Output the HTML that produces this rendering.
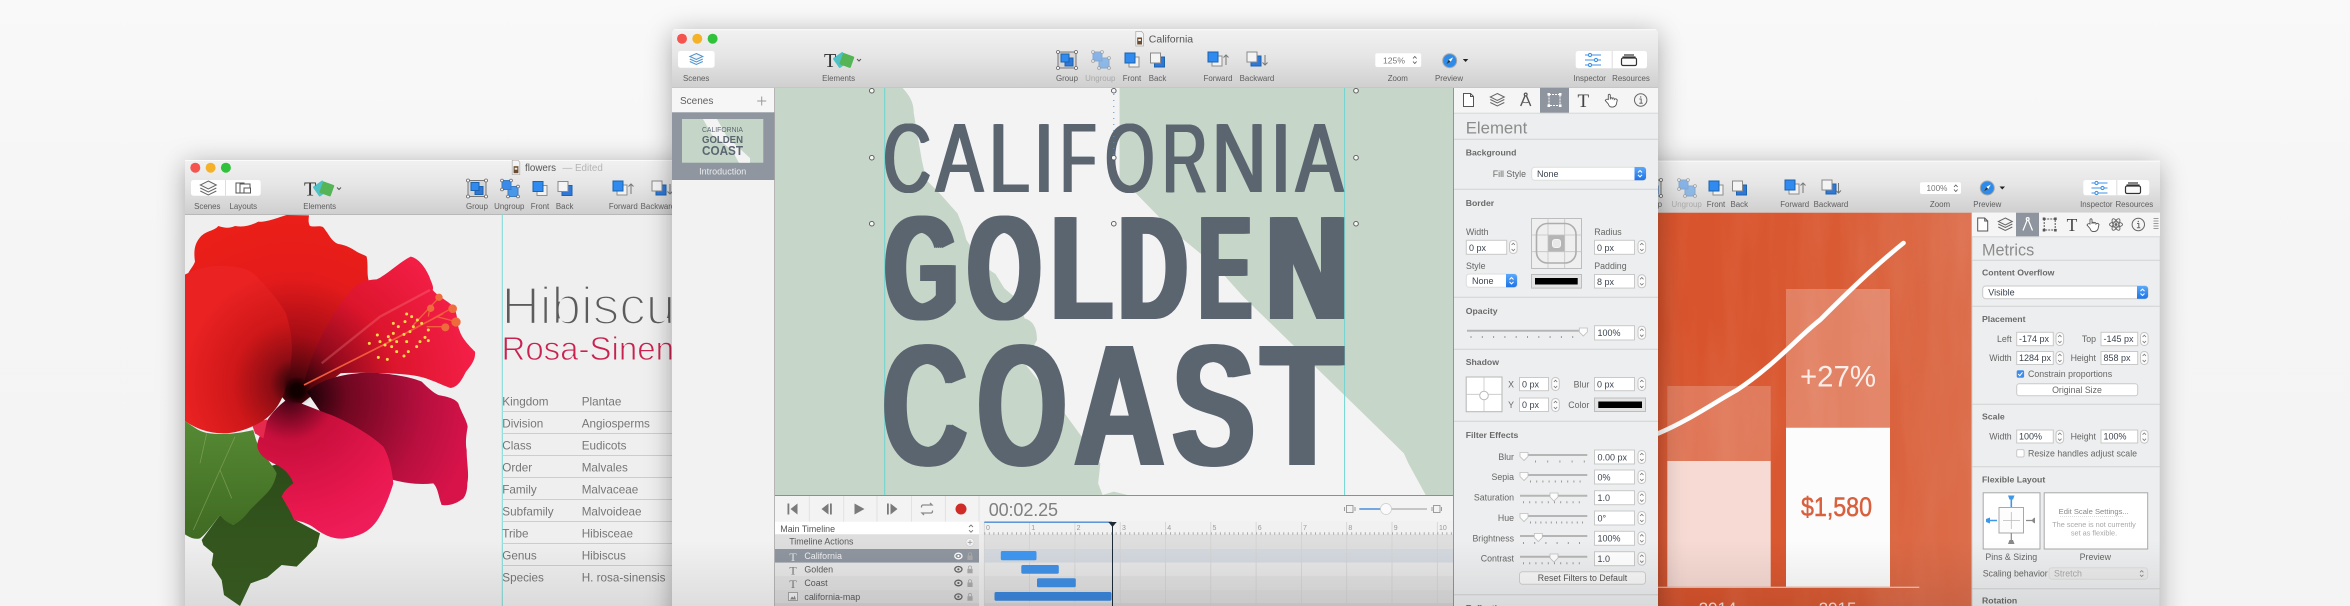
<!DOCTYPE html>
<html><head><meta charset="utf-8"><title>Hype</title>
<style>
html,body{margin:0;width:2350px;height:606px;overflow:hidden;background:linear-gradient(#f9f9f9,#f5f5f5 40%,#f4f4f4)}
svg{position:absolute;left:0;top:0}
text{font-family:"Liberation Sans",sans-serif;font-size:9px;fill:#5a5a5a}
.m{text-anchor:middle}.e{text-anchor:end}
.b{font-weight:700;font-size:8.7px;fill:#6a6a6a}
.h{font-size:16.8px;fill:#8c8c8c}
.v{fill:#3c4450;font-size:9px}
.in{fill:#fff;stroke:#c9c9c9;stroke-width:1}
.d{stroke:#d2d2d2;stroke-width:1}
.tb{font-size:7.9px;fill:#5e5e5e}
.tt{font-size:8.8px;fill:#666}
.sl{stroke:#b5b5b5;stroke-width:2}
.tk{stroke:#9a9a9a;stroke-width:2;stroke-dasharray:1 10.5}
.L{position:absolute;line-height:1;transform-origin:0 0;color:#5b6570;font-family:"Liberation Sans",sans-serif}
.c{font-size:98px;top:108.7px;text-shadow:-2px 0 #5b6570,-1px 0 #5b6570,1px 0 #5b6570,2px 0 #5b6570}
.g{font-size:148px;font-weight:700;top:194.7px;text-shadow:-6px 0 #5b6570,-3px 0 #5b6570,3px 0 #5b6570,6px 0 #5b6570}
.k{font-size:173px;font-weight:700;top:319.3px;text-shadow:-4px 0 #5b6570,-2px 0 #5b6570,2px 0 #5b6570,4px 0 #5b6570}
</style></head><body>
<svg width="2350" height="606" viewBox="0 0 2350 606" xmlns="http://www.w3.org/2000/svg">
<defs>
<linearGradient id="gt" x1="0" y1="0" x2="0" y2="1"><stop offset="0" stop-color="#f1f1f1"/><stop offset=".45" stop-color="#e6e6e6"/><stop offset="1" stop-color="#cfcfcf"/></linearGradient>
<linearGradient id="gb" x1="0" y1="0" x2="0" y2="1"><stop offset="0" stop-color="#5aa9fb"/><stop offset="1" stop-color="#1f73e6"/></linearGradient>
<linearGradient id="gor" x1="0" y1="0" x2="1" y2="0"><stop offset="0" stop-color="#d8522b"/><stop offset=".55" stop-color="#d95a33"/><stop offset="1" stop-color="#dc6e4c"/></linearGradient>
<linearGradient id="fade" x1="0" y1="0" x2="0" y2="1"><stop offset="0" stop-color="#000" stop-opacity="0"/><stop offset="1" stop-color="#000" stop-opacity=".085"/></linearGradient>
<radialGradient id="p1" gradientUnits="userSpaceOnUse" cx="340" cy="720" r="560"><stop offset="0" stop-color="#2a0208"/><stop offset=".3" stop-color="#a80d16"/><stop offset=".6" stop-color="#e41b1b"/><stop offset="1" stop-color="#ec2018"/></radialGradient>
<radialGradient id="p2" gradientUnits="userSpaceOnUse" cx="350" cy="710" r="540"><stop offset="0" stop-color="#1a0005"/><stop offset=".25" stop-color="#920a1c"/><stop offset=".55" stop-color="#dc152c"/><stop offset="1" stop-color="#f51f48"/></radialGradient>
<radialGradient id="p3" gradientUnits="userSpaceOnUse" cx="370" cy="740" r="520"><stop offset="0" stop-color="#100003"/><stop offset=".25" stop-color="#6e0720"/><stop offset=".7" stop-color="#b80f3f"/><stop offset="1" stop-color="#d8134a"/></radialGradient>
<radialGradient id="p4" gradientUnits="userSpaceOnUse" cx="330" cy="740" r="440"><stop offset="0" stop-color="#3a0210"/><stop offset=".3" stop-color="#c80f3c"/><stop offset=".8" stop-color="#e9184f"/><stop offset="1" stop-color="#ee1c58"/></radialGradient>
<radialGradient id="p5" gradientUnits="userSpaceOnUse" cx="345" cy="700" r="340"><stop offset="0" stop-color="#1c0206"/><stop offset=".22" stop-color="#8e0d14"/><stop offset=".55" stop-color="#cf1719"/><stop offset="1" stop-color="#ea2222"/></radialGradient>
<linearGradient id="l1" x1="0" y1="0" x2="0" y2="1"><stop offset="0" stop-color="#568a34"/><stop offset="1" stop-color="#3f6a22"/></linearGradient>
<linearGradient id="l2" x1="0" y1="0" x2="0" y2="1"><stop offset="0" stop-color="#2b4a18"/><stop offset="1" stop-color="#3a5f22"/></linearGradient>
<filter id="sh" x="-10%" y="-20%" width="120%" height="140%"><feDropShadow dx="0" dy="4" stdDeviation="13" flood-color="#000" flood-opacity=".33"/></filter>
<filter id="tx" x="0" y="0" width="100%" height="100%"><feTurbulence type="fractalNoise" baseFrequency=".035 .006" numOctaves="3" seed="5"/><feColorMatrix values="0 0 0 0 1 0 0 0 0 .85 0 0 0 0 .75 1.6 0 0 0 -.62"/></filter>
<filter id="bl"><feGaussianBlur stdDeviation="8"/></filter>
<clipPath id="cw1"><rect x="185" y="160" width="487" height="446"/></clipPath>
<clipPath id="cf"><rect x="185" y="214" width="487" height="392"/></clipPath>
<clipPath id="cw3"><rect x="1658" y="160" width="502" height="446"/></clipPath>
<clipPath id="co"><rect x="1658" y="213" width="314" height="393"/></clipPath>
<clipPath id="cc"><rect x="775" y="88" width="679" height="407"/></clipPath>
<clipPath id="cth"><rect x="682" y="119" width="81.3" height="43.7"/></clipPath>

<g id="front"><rect x="-3" y="-3" width="10" height="10" fill="#f2f2f2" stroke="#8e8e8e"/><rect x="-7" y="-7" width="10" height="10" fill="#2f8bf0" stroke="#1d62ad"/></g>
<g id="back"><rect x="-3" y="-3" width="10" height="10" fill="#2f78d8" stroke="#1d62ad"/><rect x="-7" y="-7" width="10" height="10" fill="#f4f4f4" stroke="#8a8a8a"/></g>
<g id="group"><rect x="-9" y="-8" width="18" height="16" fill="#d6d6d6" stroke="#777"/><rect x="-2" y="-2" width="8" height="8" fill="#2f78d8" stroke="#1d62ad"/><rect x="-6" y="-6" width="8" height="8" fill="#2f8bf0" stroke="#1d62ad"/><g fill="#fff" stroke="#666" stroke-width=".8"><circle cx="-9" cy="-8" r="1.5"/><circle cx="9" cy="-8" r="1.5"/><circle cx="-9" cy="8" r="1.5"/><circle cx="9" cy="8" r="1.5"/></g></g>
<g id="ungroup"><rect x="-2" y="-2" width="10" height="10" fill="#4a97e8" stroke="#3a7cc4"/><rect x="-8" y="-8" width="9" height="9" fill="#3a8aea" stroke="#3a7cc4"/><g fill="#fff" stroke="#666" stroke-width=".8"><circle cx="-8" cy="-8" r="1.4"/><circle cx="1" cy="-8" r="1.4"/><circle cx="-8" cy="1" r="1.4"/><circle cx="8" cy="8" r="1.4"/><circle cx="8" cy="-2" r="1.4"/><circle cx="-2" cy="8" r="1.4"/></g></g>
<g id="ungroupd" opacity=".55"><use href="#ungroup"/></g>
<g id="up"><path d="M0,-5V5M-2.5,-2.5L0,-5L2.5,-2.5" fill="none" stroke="#777"/></g>
<g id="down"><path d="M0,-5V5M-2.5,2.5L0,5L2.5,2.5" fill="none" stroke="#777"/></g>
<g id="layers" fill="none" stroke="#666" stroke-width="1"><path d="M0,-7L8,-3L0,1L-8,-3Z" fill="#f6f6f6"/><path d="M-8,0L0,4L8,0M-8,3L0,7L8,3"/></g>
<g id="layersb" fill="none" stroke="#4f93cf" stroke-width="1"><path d="M0,-6L6.5,-3L0,0L-6.5,-3Z" fill="#f6f6f6"/><path d="M-6.5,-.5L0,2.5L6.5,-.5M-6.5,2L0,5L6.5,2"/></g>
<g id="elem"><rect x="7" y="-6" width="12" height="12" rx="1" fill="#4ec1c6" transform="rotate(-35 13 0)"/><rect x="13" y="-5.5" width="12" height="12" rx="1" fill="#55b455" transform="rotate(20 19 0)"/><text x="-4" y="7" style="font-family:'Liberation Serif',serif;font-size:20px;fill:#333">T</text><path d="M29,-1l2,2l2,-2" fill="none" stroke="#555"/></g>
<g id="prev"><circle r="7" fill="#2e8bea" stroke="#a9a9a9"/><path d="M3.5,-3.5L-1,-1L-3.5,3.5L1,1Z" fill="#fff"/><path d="M-1,-1L-3.5,3.5L1,1Z" fill="#23333f"/></g>
<g id="insp" fill="none" stroke="#3f92e8" stroke-width="1.1"><path d="M-8,-5H8M-8,0H8M-8,5H8"/><g fill="#fff"><circle cx="-3" cy="-5" r="1.6"/><circle cx="3" cy="0" r="1.6"/><circle cx="-3" cy="5" r="1.6"/></g></g>
<g id="res" fill="none" stroke="#333" stroke-width="1.2"><path d="M-5,-5H5"/><path d="M-6.5,-3H6.5"/><rect x="-7.5" y="-2" width="15" height="7.5" rx="1.5" fill="#fafafa"/></g>
<g id="stp"><rect x=".5" y=".5" width="7.6" height="13" rx="3.6" fill="#fcfcfc" stroke="#c6c6c6"/><path d="M2.6,5L4.3,3.2L6,5M2.6,9L4.3,10.8L6,9" fill="none" stroke="#777" stroke-width=".8"/></g>
<g id="wht"><path d="M-4,-4h8v4l-4,4l-4,-4z" fill="#fcfcfc" stroke="#bdbdbd" stroke-width=".8"/></g>
<g id="bch"><path d="M-2,-1.2L0,-3.2L2,-1.2M-2,1.2L0,3.2L2,1.2" fill="none" stroke="#fff"/></g>
<g id="doc" fill="#fff" stroke="#555" stroke-width="1"><path d="M-5,-6.5H2L5,-3.5V6.5H-5Z"/><path d="M2,-6.5V-3.5H5" fill="none"/></g>
<g id="lay2" fill="none" stroke="#666"><path d="M0,-6.5L7,-3L0,.5L-7,-3Z"/><path d="M-7,-.5L0,3L7,-.5M-7,2.5L0,6L7,2.5"/></g>
<g id="comp" fill="none" stroke="#555" stroke-width="1.2"><circle cy="-5.5" r="1.4"/><path d="M-.8,-4L-5,6M.8,-4L5,6" stroke-width="1.4"/><path d="M-3,2Q0,3.5 3,2" stroke-width=".7"/></g>
<g id="rct" fill="none" stroke="#555"><rect x="-5.5" y="-5.5" width="11" height="11" stroke-dasharray="2 1"/><g fill="#555" stroke="none"><rect x="-7" y="-7" width="2.6" height="2.6"/><rect x="4.4" y="-7" width="2.6" height="2.6"/><rect x="-7" y="4.4" width="2.6" height="2.6"/><rect x="4.4" y="4.4" width="2.6" height="2.6"/></g></g>
<g id="hand" fill="#fff" stroke="#555" stroke-width=".9"><path d="M-4,-1V-5.5Q-3,-7 -2,-5.5V-1V-2Q-1,-3.5 0,-2V-1V-2Q1,-3.5 2,-1.5V-1Q3.5,-2.5 5,-.5L4,4Q2.5,7 -1,6.5Q-3,6.5 -4,3.5L-7,0Q-6,-2 -4,-1Z"/></g>
<g id="info" fill="none" stroke="#666"><circle r="6.2"/><path d="M-1.3,-1H.5V3.2M-1.4,3.2H2" stroke-width="1"/><circle cy="-3" r=".7" fill="#666" stroke="none"/></g>
<g id="atom" fill="none" stroke="#666" stroke-width=".9"><ellipse rx="6.5" ry="2.6"/><ellipse rx="6.5" ry="2.6" transform="rotate(60)"/><ellipse rx="6.5" ry="2.6" transform="rotate(-60)"/><circle r="1" fill="#666"/></g>
<g id="eye"><ellipse rx="3.6" ry="2.8" fill="none" stroke="#666" stroke-width="1.3"/><circle r="1.1" fill="#666"/></g>
<g id="lock"><path d="M-1.6,-.5V-2.4Q0,-4.4 1.6,-2.4V-.5" fill="none" stroke="#aaa" stroke-width=".8"/><rect x="-2.6" y="-.5" width="5.2" height="4.5" fill="#aaa"/></g>
<g id="doci"><path d="M-3.8,-7.5H2L3.8,-5.5V7H-3.8Z" fill="#f4f4f4" stroke="#aaa" stroke-width=".7"/><rect x="-2.4" y="-1.5" width="4.8" height="7" fill="#6b4c2e"/><rect x="-1.3" y="0" width="2.6" height="2" fill="#eee"/></g>
<g id="tr"><circle cx="0" r="5" fill="#f4544d"/><circle cx="15.3" r="5" fill="#f5b229"/><circle cx="30.6" r="5" fill="#30c23b"/></g>
</defs>

<!-- LEFT WINDOW -->
<g filter="url(#sh)"><rect x="185" y="160" width="560" height="480" rx="4" fill="#efefef"/></g>
<g clip-path="url(#cw1)">
<rect x="185" y="160" width="560" height="54" fill="url(#gt)"/>
<rect x="185" y="214" width="560" height="1" fill="#b8b8b8"/>
<rect x="185" y="160" width="560" height="1" fill="#fbfbfb"/>
<use href="#tr" x="195.3" y="167.7"/>
<use href="#doci" x="516" y="167.7"/>
<text x="525" y="171" style="font-size:9.8px;fill:#555">flowers</text><text x="562.5" y="171" style="font-size:9.8px;fill:#b4b4b4">—  Edited</text>
<rect x="191" y="180" width="69.7" height="15.7" rx="2.5" fill="#fff"/><rect x="225" y="180" width="1" height="15.7" fill="#ddd"/>
<use href="#layers" x="208.3" y="188"/>
<g fill="#fff" stroke="#555"><rect x="236" y="183" width="8" height="10"/><rect x="240" y="184" width="10" height="9"/><rect x="244" y="188" width="6.5" height="5"/></g>
<text class="tb m" x="207.3" y="209">Scenes</text><text class="tb m" x="243.3" y="209">Layouts</text>
<use href="#elem" x="308" y="188.5"/><text class="tb m" x="319.7" y="209">Elements</text>
<use href="#group" x="477" y="188.5"/><text class="tb m" x="477" y="209">Group</text>
<use href="#ungroup" x="510" y="188.5"/><text class="tb m" x="509.3" y="209">Ungroup</text>
<use href="#front" x="540" y="188.5"/><text class="tb m" x="540" y="209">Front</text>
<use href="#back" x="565" y="188.5"/><text class="tb m" x="564.7" y="209">Back</text>
<use href="#front" x="620" y="188"/><use href="#up" x="631" y="189"/><text class="tb m" x="623.3" y="209">Forward</text>
<use href="#back" x="659" y="188"/><use href="#down" x="670" y="189"/><text class="tb m" x="658" y="209">Backward</text>
<g clip-path="url(#cf)">
<g transform="translate(180,150) scale(.33333)" stroke-linejoin="round">
<path fill="url(#l2)" d="M70,1185L65,1170L120,1095L160,1125L235,1040L265,950L340,930L360,1040L345,1110L420,1150L410,1190L385,1215L350,1250L305,1245L262,1282L212,1300L180,1368L132,1335L125,1290L95,1245L100,1210Z"/>
<path fill="url(#l1)" d="M10,810C40,830 60,848 90,850C130,855 180,850 220,840C225,860 230,880 240,895C260,925 280,950 290,970C285,995 275,1015 260,1030C240,1050 225,1065 210,1080C195,1100 180,1115 160,1125C145,1120 130,1110 120,1095C100,1120 80,1150 60,1165C40,1170 25,1160 10,1150Z"/>
<path d="M60,940L80,850M40,1140L120,960L165,860M120,960L155,1045" fill="none" stroke="#8fae63" stroke-width="2.5" opacity=".6"/>
<path fill="url(#p1)" d="M10,400C20,370 40,350 45,335C40,300 45,280 60,262C80,240 100,245 115,228C135,235 150,235 165,228C190,232 210,228 235,215C260,218 300,200 320,195L387,196C385,210 385,220 390,228C405,232 420,225 430,232C445,250 455,275 475,282C495,285 510,292 522,300C540,312 555,315 560,320C565,345 560,370 566,392L520,640L340,780Z"/>
<path fill="url(#p2)" d="M372,700C390,620 440,510 510,425C535,395 560,390 590,388C620,375 660,335 692,320C715,325 735,350 748,380C755,400 762,410 758,420C775,440 800,450 820,470C835,495 830,520 838,540C845,565 870,590 885,605C888,630 870,650 858,665C845,690 835,710 812,714C790,708 750,685 710,678C650,668 520,665 450,672Z"/>
<path fill="url(#p3)" d="M380,725C420,690 480,672 560,668C620,668 690,680 725,695C745,715 760,728 775,735C800,740 825,745 835,760C845,790 860,810 863,830C858,860 856,880 860,900C860,940 868,970 862,1000C862,1020 858,1035 850,1045C830,1060 810,1068 785,1065C775,1040 775,1015 760,1000C720,1005 680,1000 640,990L500,900Z"/>
<path fill="url(#p4)" d="M325,745C290,770 265,800 255,825C245,850 230,870 232,890C235,910 250,925 280,940C305,950 330,970 340,1000C325,1010 310,1025 305,1040C320,1065 335,1090 342,1110C365,1115 385,1120 405,1135C430,1155 465,1170 495,1165C530,1160 560,1150 585,1120C605,1095 625,1050 640,1000C635,950 625,915 610,890C580,860 500,810 440,790Z"/>
<path fill="#e52a4e" d="M215,820L262,808L250,865L225,850Z"/>
<path fill="url(#p5)" d="M12,375C50,355 90,347 130,348C170,350 205,355 225,375C260,410 295,450 318,490C330,530 338,570 335,610C332,660 325,700 312,730C298,765 280,790 250,812C210,835 170,850 130,850C85,850 45,835 10,810Z"/>
<circle cx="352" cy="722" r="32" fill="#0c0003" opacity=".9" filter="url(#bl)"/>
<path d="M425,640L600,500L750,420" stroke="#f88" stroke-width="7" fill="none" opacity=".3"/>
<path d="M372,705L600,590L790,490" stroke="#f25a3c" stroke-width="5" fill="none"/>
<path d="M700,525L775,445M745,500L750,470M760,505L815,475M770,500L828,515M740,530L795,530" stroke="#f0603c" stroke-width="4" fill="none"/>
<g fill="#ee6c3c"><circle cx="777" cy="442" r="11"/><circle cx="752" cy="475" r="11"/><circle cx="818" cy="476" r="13"/><circle cx="828" cy="516" r="14"/><circle cx="796" cy="532" r="12"/></g>
<path fill="none" stroke="#ffd94a" stroke-width="9" stroke-linecap="round" d="M568,580h0M592,555h0M600,575h0M615,585h0M630,570h0M640,550h0M655,530h0M680,492h0M695,500h0M712,510h0M725,520h0M745,540h0M735,562h0M720,575h0M745,572h0M710,590h0M680,575h0M672,553h0M650,575h0M635,590h0M650,605h0M595,622h0M622,628h0M672,618h0M685,605h0M625,560h0M690,545h0M700,530h0M675,515h0M640,520h0"/>
</g>
</g>
<path d="M502.3,214V606" stroke="#7dd8d6" stroke-width="1"/>
<text x="501.5" y="324" style="font-size:53px;fill:#5c5c5c;stroke:#efefef;stroke-width:2.3px">Hibiscus</text>
<text x="501.5" y="360" style="font-size:33px;fill:#c9224f;stroke:#efefef;stroke-width:.9px">Rosa-Sinensis</text>
<text x="502.3" y="405.7" style="font-size:11.7px;fill:#777">Kingdom</text><text x="581.7" y="405.7" style="font-size:11.7px;fill:#777">Plantae</text>
<text x="502.3" y="427.7" style="font-size:11.7px;fill:#777">Division</text><text x="581.7" y="427.7" style="font-size:11.7px;fill:#777">Angiosperms</text>
<text x="502.3" y="449.7" style="font-size:11.7px;fill:#777">Class</text><text x="581.7" y="449.7" style="font-size:11.7px;fill:#777">Eudicots</text>
<text x="502.3" y="471.7" style="font-size:11.7px;fill:#777">Order</text><text x="581.7" y="471.7" style="font-size:11.7px;fill:#777">Malvales</text>
<text x="502.3" y="493.7" style="font-size:11.7px;fill:#777">Family</text><text x="581.7" y="493.7" style="font-size:11.7px;fill:#777">Malvaceae</text>
<text x="502.3" y="515.7" style="font-size:11.7px;fill:#777">Subfamily</text><text x="581.7" y="515.7" style="font-size:11.7px;fill:#777">Malvoideae</text>
<text x="502.3" y="537.7" style="font-size:11.7px;fill:#777">Tribe</text><text x="581.7" y="537.7" style="font-size:11.7px;fill:#777">Hibisceae</text>
<text x="502.3" y="559.7" style="font-size:11.7px;fill:#777">Genus</text><text x="581.7" y="559.7" style="font-size:11.7px;fill:#777">Hibiscus</text>
<text x="502.3" y="581.7" style="font-size:11.7px;fill:#777">Species</text><text x="581.7" y="581.7" style="font-size:11.7px;fill:#777">H. rosa-sinensis</text>
<path d="M502,411.5H672M502,433.5H672M502,455.5H672M502,477.5H672M502,499.5H672M502,521.5H672M502,543.5H672M502,565.5H672" stroke="#cdcdcd"/>
</g>

<!-- RIGHT WINDOW -->
<g filter="url(#sh)"><rect x="1600" y="160.7" width="559.3" height="480" rx="4" fill="#ededee"/></g>
<g clip-path="url(#cw3)">
<rect x="1600" y="160.7" width="560" height="52" fill="url(#gt)"/>
<rect x="1600" y="160.7" width="560" height="1" fill="#fbfbfb"/>
<rect x="1658" y="212.7" width="314" height="394" fill="url(#gor)"/>
<rect x="1658" y="212.7" width="314" height="394" filter="url(#tx)" opacity=".09"/>
<g clip-path="url(#co)">
<rect x="1667.3" y="386" width="103.4" height="75" fill="#fff" opacity=".2"/>
<rect x="1667.3" y="461" width="103.4" height="125.7" fill="#f6dad3"/>
<rect x="1786" y="289" width="104" height="138.7" fill="#fff" opacity=".24"/>
<rect x="1786" y="427.7" width="104" height="159" fill="#fcfcfc"/>
<path d="M1658,433.5C1690,420 1715,402 1737,390C1775,365 1800,335 1820,320C1860,280 1880,262 1903.5,243" fill="none" stroke="#fff" stroke-width="4.6" stroke-linecap="round"/>
<path d="M1658,587.3H1919.3" stroke="#f6e0da" stroke-width="1"/>
<text class="m" x="1838" y="386.5" textLength="76" lengthAdjust="spacingAndGlyphs" style="font-size:30px;fill:#fbeee9">+27%</text>
<text class="m" x="1836.5" y="516" textLength="71" lengthAdjust="spacingAndGlyphs" style="font-size:27px;fill:#d8603c;stroke:#d8603c;stroke-width:.5px">$1,580</text>
<text class="m" x="1717.5" y="614" style="font-size:17px;fill:#f7e3dc">2014</text>
<text class="m" x="1837.5" y="614" style="font-size:17px;fill:#f7e3dc">2015</text>
</g>
<use href="#ungroupd" x="1687" y="188"/><text class="tb m" x="1686.7" y="207" style="fill:#aaa">Ungroup</text>
<use href="#group" x="1652" y="188"/><text class="tb m" x="1651" y="207">Group</text>
<use href="#front" x="1716" y="188"/><text class="tb m" x="1716" y="207">Front</text>
<use href="#back" x="1739.5" y="188"/><text class="tb m" x="1739.3" y="207">Back</text>
<use href="#front" x="1792" y="187"/><use href="#up" x="1803" y="188"/><text class="tb m" x="1794.7" y="207">Forward</text>
<use href="#back" x="1829" y="187"/><use href="#down" x="1838.5" y="188"/><text class="tb m" x="1831" y="207">Backward</text>
<rect x="1920" y="182.3" width="41" height="11.7" rx="2" fill="#fff"/><text x="1926.5" y="191" style="font-size:8.2px;fill:#777">100%</text><path d="M1954,187L1955.8,185L1957.6,187M1954,189.5L1955.8,191.5L1957.6,189.5" fill="none" stroke="#555" stroke-width=".8"/>
<text class="tb m" x="1940" y="207">Zoom</text>
<use href="#prev" x="1987.3" y="188"/><path d="M1999.5,186.5h5.5l-2.7,3z" fill="#222"/><text class="tb m" x="1987.3" y="207">Preview</text>
<rect x="2083.3" y="180" width="66" height="15.3" rx="2.5" fill="#fff"/><rect x="2116.3" y="180" width="1" height="15.3" fill="#ddd"/>
<use href="#insp" x="2099.5" y="188"/><use href="#res" x="2133" y="188"/>
<text class="tb m" x="2096.3" y="207">Inspector</text><text class="tb m" x="2134.3" y="207">Resources</text>

<rect x="1971.7" y="212.7" width="188" height="394" fill="#edeeef"/>
<rect x="1971.7" y="212.7" width="1" height="394" fill="#d9d9d9"/>
<rect x="1972" y="212.7" width="188" height="23.6" fill="#f5f5f5"/>
<rect x="1972" y="236.3" width="188" height="1" fill="#d8d8d8"/>
<rect x="2016" y="212.7" width="23" height="23.6" fill="#8e959e"/>
<use href="#doc" x="1982.7" y="224.5"/><use href="#lay2" x="2005.3" y="224.5"/>
<g fill="none" stroke="#fff" stroke-width="1.2"><circle cx="2027.7" cy="219" r="1.4"/><path d="M2027,220.5L2023,230.5M2028.5,220.5L2032.5,230.5"/></g>
<use href="#rct" x="2049.7" y="224.5"/>
<text class="m" x="2072" y="231" style="font-family:'Liberation Serif',serif;font-size:17.5px;fill:#444">T</text>
<use href="#hand" x="2094" y="225"/><use href="#atom" x="2116" y="224.5"/><use href="#info" x="2138.3" y="224.5"/>
<path d="M2153.5,218.5h5M2153.5,221h5M2153.5,223.5h5M2153.5,226h5M2153.5,228.5h5" stroke="#999"/>
<text class="h" x="1982" y="255.5" style="font-size:16.2px">Metrics</text>
<path class="d" d="M1972,260.3H2160M1972,306.3H2160M1972,404.3H2160M1972,466.7H2160M1972,588.7H2160"/>
<text class="b" x="1982" y="275.7">Content Overflow</text>
<rect class="in" x="1982.7" y="286" width="165.3" height="12.7" rx="3" stroke="#ddd"/><text class="v" x="1988.3" y="295.5">Visible</text>
<path d="M2137,286h8a3,3 0 0 1 3,3v6.7a3,3 0 0 1-3,3h-8z" fill="url(#gb)"/><use href="#bch" x="2142.5" y="292.3"/>
<text class="b" x="1982" y="322">Placement</text>
<text class="tt e" x="2011.7" y="342">Left</text><rect class="in" x="2016.7" y="332.3" width="36.6" height="13.4"/><text class="v" x="2019" y="342">-174 px</text><use href="#stp" x="2055.5" y="332"/>
<text class="tt e" x="2096" y="342">Top</text><rect class="in" x="2101" y="332.3" width="36.7" height="13.4"/><text class="v" x="2103.5" y="342">-145 px</text><use href="#stp" x="2140" y="332"/>
<text class="tt e" x="2011.7" y="361">Width</text><rect class="in" x="2016.7" y="351.5" width="36.6" height="13"/><text class="v" x="2019" y="361">1284 px</text><use href="#stp" x="2055.5" y="351"/>
<text class="tt e" x="2096" y="361">Height</text><rect class="in" x="2101" y="351.5" width="36.7" height="13"/><text class="v" x="2103.5" y="361">858 px</text><use href="#stp" x="2140" y="351"/>
<rect x="2016.7" y="370.3" width="7.4" height="7.4" rx="1.5" fill="#3c8dec"/><path d="M2018.2,374l1.6,1.7l2.7,-3.4" stroke="#fff" stroke-width="1" fill="none"/>
<text class="tt" x="2028" y="377">Constrain proportions</text>
<rect class="in" x="2016.7" y="383.7" width="121" height="12" rx="2.5" stroke="#ddd"/><text class="tt m" x="2077" y="393">Original Size</text>
<text class="b" x="1982" y="419.5">Scale</text>
<text class="tt e" x="2011.7" y="439.7">Width</text><rect class="in" x="2016.7" y="430" width="36.6" height="13"/><text class="v" x="2019" y="439.7">100%</text><use href="#stp" x="2055.5" y="429.7"/>
<text class="tt e" x="2096" y="439.7">Height</text><rect class="in" x="2101" y="430" width="36.7" height="13"/><text class="v" x="2103.5" y="439.7">100%</text><use href="#stp" x="2140" y="429.7"/>
<rect class="in" x="2016.7" y="449.6" width="7.4" height="7.4" rx="1.5"/><text class="tt" x="2028" y="456.3">Resize handles adjust scale</text>
<text class="b" x="1982" y="482.3">Flexible Layout</text>
<rect x="1983.2" y="492.8" width="56.8" height="56.2" fill="#fff" stroke="#a8a8a8"/>
<rect x="1999" y="507.5" width="24.5" height="25.5" fill="#fdfdfd" stroke="#a8a8a8"/>
<path d="M2011.3,512V529M2003,520.5H2020" stroke="#bbb" stroke-width=".8"/>
<path d="M2011.3,498V507M1987,520.5H1997" stroke="#3f97e8" stroke-width="1.6"/><path d="M2008,495.5h6.5l-1.5,4h-3.5zM1990,517.5v6l-4,-1.5v-3z" fill="#3f97e8"/>
<path d="M2011.3,533V541M2026,520.5H2035" stroke="#888" stroke-width="1.2"/><path d="M2008,544h6.5l-1.5,-4h-3.5zM2035,517.5v6l-2.5,-1.5v-3z" fill="#888"/>
<rect x="2044.2" y="492.8" width="103.5" height="56.2" fill="#fff" stroke="#a8a8a8"/>
<text class="m" x="2093.7" y="514" style="font-size:7.6px;fill:#888">Edit Scale Settings...</text><path d="M2060,516.5H2124" stroke="#ddd" stroke-dasharray="1 1"/>
<text class="m" x="2094" y="527" style="font-size:7.3px;fill:#a8a8a8">The scene is not currently</text><text class="m" x="2094" y="535.5" style="font-size:7.3px;fill:#a8a8a8">set as flexible.</text>
<text class="tt m" x="2011.3" y="560">Pins &amp; Sizing</text><text class="tt m" x="2095.3" y="560">Preview</text>
<text class="tt" x="1982.7" y="576.5">Scaling behavior</text>
<rect x="2049" y="567.7" width="98.7" height="11.6" rx="3" fill="#ebebeb" stroke="#ddd"/><text x="2054" y="576.5" style="font-size:8.8px;fill:#a8a8a8">Stretch</text><path d="M2140,572.3l1.7,-1.7l1.7,1.7M2140,574.8l1.7,1.7l1.7,-1.7" fill="none" stroke="#888" stroke-width=".8"/>
<text class="b" x="1982" y="603.3">Rotation</text>
</g>

<rect x="185" y="540" width="1975" height="66" fill="url(#fade)"/>

<!-- MAIN WINDOW -->
<g filter="url(#sh)"><rect x="672" y="29.3" width="986" height="620" rx="4" fill="#eee"/></g>
<path d="M672,88V33.3a4,4 0 0 1 4,-4H1654a4,4 0 0 1 4,4V88Z" fill="url(#gt)"/>
<path d="M674,29.8H1656" stroke="#fbfbfb"/>
<rect x="672" y="87.5" width="986" height="1" fill="#bdbdbd"/>
<use href="#tr" x="682" y="38.7"/>
<use href="#doci" x="1139.6" y="39"/><text x="1148.8" y="42.5" style="font-size:10.5px;fill:#555">California</text>

<rect x="678" y="51" width="36.6" height="16.7" rx="2.5" fill="#fff"/>
<use href="#layersb" x="696.3" y="59.5"/>
<text class="tb m" x="696.2" y="81">Scenes</text>
<use href="#elem" x="828" y="60"/><text class="tb m" x="838.6" y="81">Elements</text>
<use href="#group" x="1067" y="60"/><text class="tb m" x="1067" y="81">Group</text>
<use href="#ungroupd" x="1101" y="60"/><text class="tb m" x="1100.3" y="81" style="fill:#a8a8a8">Ungroup</text>
<use href="#front" x="1132" y="60"/><text class="tb m" x="1132" y="81">Front</text>
<use href="#back" x="1157.5" y="60"/><text class="tb m" x="1157.5" y="81">Back</text>
<use href="#front" x="1215" y="59"/><use href="#up" x="1226" y="60"/><text class="tb m" x="1218" y="81">Forward</text>
<use href="#back" x="1254" y="59"/><use href="#down" x="1265" y="60"/><text class="tb m" x="1257" y="81">Backward</text>
<rect x="1375.3" y="53.3" width="45.9" height="13.7" rx="2" fill="#fff"/><text x="1383" y="63.3" style="font-size:8.6px;fill:#777">125%</text><path d="M1413,58.5l1.8,-2l1.8,2M1413,61.5l1.8,2l1.8,-2" fill="none" stroke="#555" stroke-width=".8"/>
<text class="tb m" x="1397.8" y="81">Zoom</text>
<use href="#prev" x="1449.7" y="60.7"/><path d="M1462.8,59h5.5l-2.7,3z" fill="#222"/><text class="tb m" x="1449" y="81">Preview</text>
<rect x="1575.7" y="51" width="71.3" height="17.3" rx="2.5" fill="#fff"/><rect x="1611.7" y="51" width="1" height="17.3" fill="#ddd"/>
<use href="#insp" x="1593" y="60"/><use href="#res" x="1629" y="60"/>
<text class="tb m" x="1589.7" y="81">Inspector</text><text class="tb m" x="1631" y="81">Resources</text>

<!-- sidebar -->
<rect x="672" y="88" width="102.5" height="518" fill="#f2f2f2"/>
<rect x="672" y="88" width="102.5" height="24.3" fill="#f6f6f6"/>
<text x="680" y="104.2" style="font-size:10px;fill:#5e5e5e">Scenes</text>
<path d="M761.7,96.5V105.5M757.2,101H766.2" stroke="#9a9a9a"/>
<rect x="672" y="112.3" width="102.5" height="67.7" fill="#8f969f"/>
<rect x="682" y="119" width="81.3" height="43.7" fill="#c5d6c8"/>
<g clip-path="url(#cth)"><path d="M703,119L717,119L727,137L750,158L750,163L739,163L732,150L712,135Z" fill="#f3f3f3"/></g>
<text class="m" x="722.5" y="132" textLength="41" lengthAdjust="spacingAndGlyphs" style="font-size:7px;fill:#5b6570">CALIFORNIA</text>
<text class="m" x="722.5" y="143" textLength="41" lengthAdjust="spacingAndGlyphs" style="font-size:10.5px;font-weight:700;fill:#5b6570">GOLDEN</text>
<text class="m" x="722.5" y="155" textLength="41" lengthAdjust="spacingAndGlyphs" style="font-size:12.5px;font-weight:700;fill:#5b6570">COAST</text>
<text class="m" x="722.7" y="174.5" style="font-size:9px;fill:#e9ecef">Introduction</text>
<rect x="774.2" y="88" width="1" height="518" fill="#a6a6a6"/>

<!-- canvas -->
<rect x="775" y="88" width="679" height="407" fill="#c6d6c8"/>
<g clip-path="url(#cc)"><g transform="translate(770,80) scale(.44643,.33333)">
<path fill="#f3f3f3" d="M297,24C315,50 322,70 322,100L340,240L350,300L380,340L420,400L432,440L440,480L480,560L505,582L525,625L560,665L570,715C590,722 598,745 598,780L570,850L600,900L660,1000L720,1110L740,1150L735,1210L745,1245L770,1235L810,1248L1470,1248L1430,1150L1420,1120L1290,950L1160,780L1060,650L1000,560L900,450L820,340L783,300L783,24Z"/>
</g></g>
<path d="M884.7,88V495M1344.6,88V495" stroke="#6fd4d2" stroke-width="1"/>

<!-- timeline -->
<rect x="775" y="495" width="679" height="111" fill="#ececec"/>
<rect x="775" y="495" width="679" height="1" fill="#8e8e8e"/>
<rect x="775" y="496" width="679" height="25.7" fill="#f3f3f3"/>
<path d="M809.3,496V521.7M843.7,496V521.7M877,496V521.7M911.5,496V521.7M945.4,496V521.7M979,496V521.7" stroke="#e2e2e2"/>
<path d="M787.5,503.5h1.8v11h-1.8zM797.5,503.5v11l-7,-5.5z" fill="#7a7a7a"/>
<path d="M830,503.5h1.8v11H830zM828.5,503.5v11l-7,-5.5z" fill="#7a7a7a"/>
<path d="M854.5,503.5v11l10,-5.5z" fill="#7a7a7a"/>
<path d="M887,503.5h1.8v11H887zM890.5,503.5v11l7,-5.5z" fill="#7a7a7a"/>
<path d="M921.5,507.5v-1a1.5,1.5 0 0 1 1.5,-1.5h9l-2,-2M932.5,510.5v1a1.5,1.5 0 0 1-1.5,1.5h-9l2,2" fill="none" stroke="#8a8a8a" stroke-width="1.3"/>
<circle cx="961" cy="509" r="5.5" fill="#cf2c28"/>
<text x="988.7" y="516" style="font-size:18px;fill:#808080;letter-spacing:-.1px">00:02.25</text>
<rect x="1346.5" y="505.5" width="6.5" height="7" fill="none" stroke="#888" stroke-width=".8"/><path d="M1344.5,507v4M1355,507v4M1432,507v4M1441.5,507v4" stroke="#888" stroke-width=".8"/><rect x="1433.5" y="505.5" width="6.5" height="7" fill="none" stroke="#888" stroke-width=".8"/>
<path d="M1359.3,509H1386" stroke="#4a90d9" stroke-width="1.6"/><path d="M1386,509H1427" stroke="#b8b8b8" stroke-width="1.6"/><circle cx="1386" cy="509" r="5.5" fill="#fafafa" stroke="#ccc" stroke-width=".7"/>

<rect x="775" y="521.7" width="204" height="12.6" fill="#fff"/>
<rect x="979" y="521.7" width="475" height="12.6" fill="#f1f1f1"/>
<rect x="775" y="534.3" width="679" height="14.7" fill="#dedede"/>
<rect x="775" y="549" width="204" height="13.7" fill="#8f969f"/>
<rect x="979" y="549" width="475" height="13.7" fill="#d4d9df"/>
<rect x="775" y="562.7" width="679" height="13.3" fill="#e7e7e7"/>
<rect x="775" y="576" width="679" height="14" fill="#e0e0e0"/>
<rect x="775" y="590" width="679" height="13" fill="#dcdcdc"/>
<rect x="775" y="603" width="679" height="3" fill="#d4d4d4"/>
<path d="M981.5,534V606" stroke="#ececec" stroke-width="5"/>
<path d="M984.3,522V606M1029.6,522V606M1074.9,522V606M1120.2,522V606M1165.5,522V606M1210.8,522V606M1256.1,522V606M1301.4,522V606M1346.7,522V606M1392,522V606M1437.3,522V606" stroke="#d2d2d2" stroke-width=".8"/>
<path d="M984.3,533.5H1454" stroke="#aaa" stroke-width="2.4" stroke-dasharray="1 3.53"/>
<text x="986" y="530" style="font-size:7px;fill:#999">0</text><text x="1031.3" y="530" style="font-size:7px;fill:#999">1</text><text x="1076.6" y="530" style="font-size:7px;fill:#999">2</text><text x="1122" y="530" style="font-size:7px;fill:#999">3</text><text x="1167.2" y="530" style="font-size:7px;fill:#999">4</text><text x="1212.5" y="530" style="font-size:7px;fill:#999">5</text><text x="1257.8" y="530" style="font-size:7px;fill:#999">6</text><text x="1303" y="530" style="font-size:7px;fill:#999">7</text><text x="1348.4" y="530" style="font-size:7px;fill:#999">8</text><text x="1393.7" y="530" style="font-size:7px;fill:#999">9</text><text x="1439" y="530" style="font-size:7px;fill:#999">10</text>
<path d="M984.3,522.2H1112" stroke="#4a8ad4" stroke-width="1.4"/>
<rect x="1000.8" y="551" width="35.7" height="9.3" rx="1.5" fill="#3f97f0"/>
<rect x="1021.3" y="565" width="37.5" height="8.7" rx="1.5" fill="#3f91e8"/>
<rect x="1037" y="578.3" width="38.8" height="9" rx="1.5" fill="#3f8ee4"/>
<rect x="994.5" y="592" width="117" height="8.7" rx="1.5" fill="#3b86dc"/>
<path d="M1112.5,526V606" stroke="#1e2a36" stroke-width="1"/><path d="M1108.3,522h8.4l-4.2,5z" fill="#1e2a36"/>
<text x="780.3" y="531.8" style="font-size:8.9px;fill:#555">Main Timeline</text>
<path d="M969,527l2,-2l2,2M969,530.2l2,2l2,-2" fill="none" stroke="#777" stroke-width=".9"/>
<text x="789.2" y="544.5" style="font-size:8.9px;fill:#5a5a5a">Timeline Actions</text>
<circle cx="970" cy="542.3" r="4" fill="#f4f4f4" stroke="#ccc" stroke-width=".6"/><path d="M970,540v4.6M967.7,542.3h4.6" stroke="#999" stroke-width=".8"/>
<text class="m" x="793" y="561" style="font-family:'Liberation Serif',serif;font-size:12px;fill:#e4e7ea">T</text><text class="m" x="793" y="574.3" style="font-family:'Liberation Serif',serif;font-size:12px;fill:#777">T</text><text class="m" x="793" y="588" style="font-family:'Liberation Serif',serif;font-size:12px;fill:#777">T</text>
<rect x="788.5" y="592.5" width="9" height="8" fill="#f0f0f0" stroke="#888" stroke-width=".7"/><path d="M790,599.5l2,-3l1.5,1.5l1,-2.5l1.5,4z" fill="#888"/>
<text x="804.4" y="559.2" style="font-size:8.9px;fill:#eef0f2">California</text>
<text x="804.4" y="572.5" style="font-size:8.9px;fill:#5a5a5a">Golden</text>
<text x="804.4" y="586.2" style="font-size:8.9px;fill:#5a5a5a">Coast</text>
<text x="804.4" y="599.8" style="font-size:8.9px;fill:#5a5a5a">california-map</text>
<g transform="translate(958.4,556)"><ellipse rx="3.6" ry="2.8" fill="none" stroke="#fff" stroke-width="1.3"/><circle r="1.1" fill="#fff"/></g><use href="#lock" x="970" y="556"/><use href="#eye" x="958.4" y="569.3"/><use href="#lock" x="970" y="569.3"/><use href="#eye" x="958.4" y="583"/><use href="#lock" x="970" y="583"/><use href="#eye" x="958.4" y="596.7"/><use href="#lock" x="970" y="596.7"/>

<!-- inspector -->
<rect x="1453.5" y="88" width="204.5" height="518" fill="#edeeef"/>
<rect x="1453" y="88" width="1" height="518" fill="#8f9693"/>
<rect x="1454" y="88" width="204" height="24.7" fill="#f5f5f5"/>
<rect x="1454" y="112.7" width="204" height="1" fill="#d8d8d8"/>
<rect x="1540" y="87.7" width="29" height="25" fill="#8e959e"/>
<use href="#doc" x="1468.5" y="100"/><use href="#lay2" x="1497.3" y="100"/><use href="#comp" x="1525.7" y="100"/>
<g transform="translate(1554.5,100)" fill="none" stroke="#fff"><rect x="-5.5" y="-5.5" width="11" height="11" stroke-dasharray="2 1"/><g fill="#fff" stroke="none"><rect x="-7" y="-7" width="2.6" height="2.6"/><rect x="4.4" y="-7" width="2.6" height="2.6"/><rect x="-7" y="4.4" width="2.6" height="2.6"/><rect x="4.4" y="4.4" width="2.6" height="2.6"/></g></g>
<text class="m" x="1583.3" y="107" style="font-family:'Liberation Serif',serif;font-size:19px;fill:#444">T</text>
<use href="#hand" x="1612.3" y="100.5"/><use href="#info" x="1640.7" y="100"/>
<text class="h" x="1465.7" y="133.5">Element</text>
<path class="d" d="M1454,139.3H1658M1454,189.3H1658M1454,297.3H1658M1454,349.3H1658M1454,421.3H1658M1454,594.7H1658"/>
<text class="b" x="1465.7" y="155.5">Background</text>
<text class="tt e" x="1526" y="177">Fill Style</text>
<rect x="1531.7" y="167.3" width="114.3" height="13" rx="3" fill="#fff" stroke="#ddd"/><text class="v" x="1537" y="176.8">None</text>
<path d="M1634.5,167h8.5a3,3 0 0 1 3,3v7.3a3,3 0 0 1-3,3h-8.5z" fill="url(#gb)"/><use href="#bch" x="1640" y="173.7"/>
<text class="b" x="1465.7" y="206">Border</text>
<text class="tt" x="1466" y="235">Width</text><rect class="in" x="1466.3" y="240.3" width="40.4" height="14"/><text class="v" x="1469" y="251">0 px</text><use href="#stp" x="1509" y="240"/>
<text class="tt" x="1466" y="269.2">Style</text><rect x="1466.3" y="274" width="51" height="13.3" rx="3" fill="#fff" stroke="#ddd"/><text class="v" x="1472" y="284">None</text>
<path d="M1506,274h8a3,3 0 0 1 3,3v7.3a3,3 0 0 1-3,3h-8z" fill="url(#gb)"/><use href="#bch" x="1511.5" y="280.7"/>
<rect x="1531.5" y="218.5" width="50" height="50" fill="#efefef" stroke="#bdbdbd"/>
<rect x="1548" y="235" width="16.7" height="16.7" fill="#b5b5b5"/>
<path d="M1548,218.5V268.5M1564.7,218.5V268.5M1531.5,235H1581.5M1531.5,251.7H1581.5" stroke="#c4c4c4" stroke-width=".8"/>
<rect x="1536.5" y="223.5" width="39.5" height="39.5" rx="11" fill="none" stroke="#adadad" stroke-width="1.6"/>
<rect x="1552.5" y="239.5" width="8" height="8" rx="2.5" fill="#e9e9e9" stroke="#f5f5f5"/>
<rect x="1531.5" y="274.5" width="50" height="13.6" fill="#e4e4e4" stroke="#bdbdbd"/><rect x="1535" y="278" width="42.7" height="6.5" fill="#000"/>
<text class="tt" x="1594.3" y="235">Radius</text><rect class="in" x="1594.5" y="240.3" width="40" height="14"/><text class="v" x="1597" y="251">0 px</text><use href="#stp" x="1637.5" y="240"/>
<text class="tt" x="1594.3" y="269.2">Padding</text><rect class="in" x="1594.5" y="274.5" width="40" height="13.6"/><text class="v" x="1597" y="285">8 px</text><use href="#stp" x="1637.5" y="274.3"/>
<text class="b" x="1465.7" y="314">Opacity</text>
<path class="sl" d="M1467,330.7H1583"/><path class="tk" d="M1470.5,337H1580" style="stroke-dasharray:1 10.3;stroke-width:2"/><use href="#wht" x="1583.3" y="332"/>
<rect class="in" x="1594.5" y="325.7" width="40" height="14.3"/><text class="v" x="1597.5" y="336">100%</text><use href="#stp" x="1637.5" y="325.7"/>
<text class="b" x="1465.7" y="365.2">Shadow</text>
<rect x="1466.2" y="377" width="35.8" height="34.7" fill="#fff" stroke="#b5b5b5"/><path d="M1484,377V411.7M1466,394.3H1502" stroke="#c5c5c5" stroke-width=".8"/><circle cx="1484" cy="395.5" r="4.3" fill="#fff" stroke="#bbb"/>
<text class="tt e" x="1514" y="387.5">X</text><rect class="in" x="1519.5" y="377.5" width="29" height="13.2"/><text class="v" x="1522" y="387.5">0 px</text><use href="#stp" x="1551.2" y="377"/>
<text class="tt e" x="1514" y="408">Y</text><rect class="in" x="1519.5" y="398" width="29" height="13.5"/><text class="v" x="1522" y="408">0 px</text><use href="#stp" x="1551.2" y="398"/>
<text class="tt e" x="1589.3" y="387.5">Blur</text><rect class="in" x="1594.5" y="377.5" width="40" height="13.2"/><text class="v" x="1597" y="387.5">0 px</text><use href="#stp" x="1637.5" y="377"/>
<text class="tt e" x="1589.3" y="408">Color</text><rect x="1594.5" y="398" width="51" height="13.5" fill="#e4e4e4" stroke="#bdbdbd"/><rect x="1598.3" y="401.5" width="43.7" height="6.5" fill="#000"/>
<text class="b" x="1465.7" y="438">Filter Effects</text>

<text class="tt e" x="1514" y="460">Blur</text><path class="sl" d="M1520,455H1587.3"/><path class="tk" d="M1535,461.5H1585" style="stroke-dasharray:1 11.2"/><use href="#wht" x="1524" y="456.5"/><rect class="in" x="1594.5" y="450" width="40" height="14"/><text class="v" x="1597.5" y="460.3">0.00 px</text><use href="#stp" x="1637.5" y="450"/>
<text class="tt e" x="1514" y="480">Sepia</text><path class="sl" d="M1520,475H1587.3"/><path class="tk" d="M1530,481.5H1585" style="stroke-dasharray:1 5.2"/><use href="#wht" x="1524" y="476.5"/><rect class="in" x="1594.5" y="470" width="40" height="14"/><text class="v" x="1597.5" y="480.3">0%</text><use href="#stp" x="1637.5" y="470"/>
<text class="tt e" x="1514" y="500.7">Saturation</text><path class="sl" d="M1520,495.7H1587.3"/><path class="tk" d="M1523,502.2H1585" style="stroke-dasharray:1 5.2"/><use href="#wht" x="1554" y="497"/><rect class="in" x="1594.5" y="490.7" width="40" height="14"/><text class="v" x="1597.5" y="501">1.0</text><use href="#stp" x="1637.5" y="490.7"/>
<text class="tt e" x="1514" y="521">Hue</text><path class="sl" d="M1520,516H1587.3"/><path class="tk" d="M1530,522.5H1585" style="stroke-dasharray:1 4.2"/><use href="#wht" x="1524" y="517.5"/><rect class="in" x="1594.5" y="511" width="40" height="14"/><text class="v" x="1597.5" y="521.3">0°</text><use href="#stp" x="1637.5" y="511"/>
<text class="tt e" x="1514" y="541.3">Brightness</text><path class="sl" d="M1520,536H1587.3"/><path class="tk" d="M1523,543H1585" style="stroke-dasharray:1 10.2"/><use href="#wht" x="1538.3" y="537.5"/><rect class="in" x="1594.5" y="531.3" width="40" height="14"/><text class="v" x="1597.5" y="541.6">100%</text><use href="#stp" x="1637.5" y="531.3"/>
<text class="tt e" x="1514" y="561.7">Contrast</text><path class="sl" d="M1520,556.7H1587.3"/><path class="tk" d="M1523,563.2H1585" style="stroke-dasharray:1 5.2"/><use href="#wht" x="1554" y="558"/><rect class="in" x="1594.5" y="551.7" width="40" height="14"/><text class="v" x="1597.5" y="562">1.0</text><use href="#stp" x="1637.5" y="551.7"/>
<rect x="1519.5" y="571.7" width="126" height="12.6" rx="3" fill="#f8f8f8" stroke="#cfcfcf"/><text class="m" x="1582.5" y="581.2" style="font-size:8.8px;fill:#555">Reset Filters to Default</text>
<text class="b" x="1465.7" y="611">Reflection</text>
<rect x="672" y="540" width="986" height="66" fill="url(#fade)"/>
</svg>

<span class="L c" style="left:883.2px;transform:scaleX(.679)">C</span><span class="L c" style="left:935.7px;transform:scaleX(.72)">A</span><span class="L c" style="left:989.2px;transform:scaleX(.747)">L</span><span class="L c" style="left:1034px;transform:scaleX(.726)">I</span><span class="L c" style="left:1059.6px;transform:scaleX(.61)">F</span><span class="L c" style="left:1105.2px;transform:scaleX(.65)">O</span><span class="L c" style="left:1162.3px;transform:scaleX(.645)">R</span><span class="L c" style="left:1212.3px;transform:scaleX(.768)">N</span><span class="L c" style="left:1270.6px;transform:scaleX(.726)">I</span><span class="L c" style="left:1295.9px;transform:scaleX(.72)">A</span>
<span class="L g" style="left:885.3px;transform:scaleX(.632)">G</span><span class="L g" style="left:968.4px;transform:scaleX(.631)">O</span><span class="L g" style="left:1051.6px;transform:scaleX(.659)">L</span><span class="L g" style="left:1119.3px;transform:scaleX(.635)">D</span><span class="L g" style="left:1199px;transform:scaleX(.53)">E</span><span class="L g" style="left:1266.5px;transform:scaleX(.75)">N</span>
<span class="L k" style="left:882.4px;transform:scaleX(.684)">C</span><span class="L k" style="left:976.7px;transform:scaleX(.669)">O</span><span class="L k" style="left:1074.2px;transform:scaleX(.726)">A</span><span class="L k" style="left:1172.1px;transform:scaleX(.72)">S</span><span class="L k" style="left:1261.3px;transform:scaleX(.776)">T</span>

<svg width="2350" height="606" viewBox="0 0 2350 606" xmlns="http://www.w3.org/2000/svg" style="pointer-events:none">
<path d="M1113.8,94V156" stroke="#4a90d9" stroke-width="1" stroke-dasharray="1 5"/>
<g fill="#f7f7f7" stroke="#545454" stroke-width=".9">
<circle cx="871.8" cy="90.7" r="2.3"/><circle cx="1113.8" cy="90.7" r="2.3"/><circle cx="1356" cy="90.7" r="2.3"/>
<circle cx="871.8" cy="157.7" r="2.3"/><circle cx="1113.8" cy="157.7" r="2.3"/><circle cx="1356" cy="157.7" r="2.3"/>
<circle cx="871.8" cy="223.7" r="2.3"/><circle cx="1113.8" cy="223.7" r="2.3"/><circle cx="1356" cy="223.7" r="2.3"/>
</g>
</svg>
</body></html>
